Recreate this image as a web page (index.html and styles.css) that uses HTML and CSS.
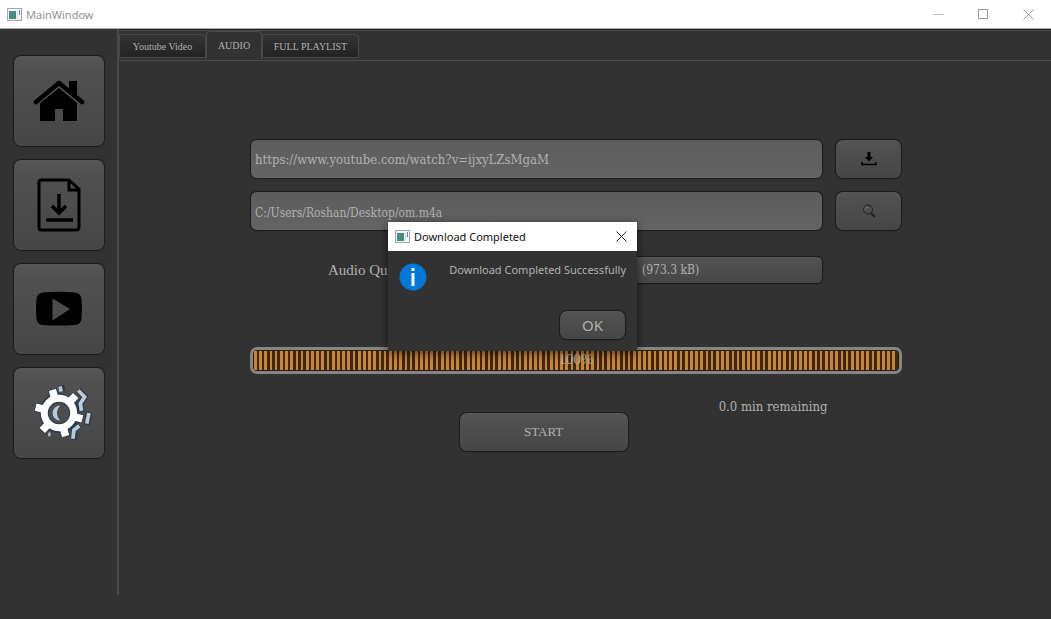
FILE: index.html
```html
<!DOCTYPE html>
<html lang="en">
<head>
<meta charset="utf-8">
<title>MainWindow</title>
<link rel="stylesheet" href="styles.css">
</head>
<body>
<svg class="defs" aria-hidden="true">
  <linearGradient id="tile" x1="0" y1="0" x2="1" y2="1"><stop offset="0" stop-color="#4d86a8"/><stop offset="1" stop-color="#3f8f62"/></linearGradient>
  <symbol id="app" viewBox="0 0 15 13">
    <rect x=".5" y=".5" width="14" height="12" fill="#f4f6f8" stroke="#a3a8ac"/>
    <rect x="2" y="3" width="7" height="8" fill="url(#tile)"/>
    <rect x="10" y="3" width="1" height="8" fill="#d5dadd"/>
    <rect x="12" y="2" width="1" height="5" fill="#5f88a8"/>
  </symbol>
</svg>
<div class="window">
  <header class="titlebar">
    <svg class="app-icon"><use href="#app"/></svg>
    <h1 class="title">MainWindow</h1>
    <div class="controls">
      <button class="control" aria-label="Minimize"><svg width="11" height="11"><path d="M0 5.5h11" stroke="#c0c0c0"/></svg></button>
      <button class="control" aria-label="Maximize"><svg width="11" height="11"><rect x=".5" y=".5" width="9" height="9" fill="none" stroke="#999"/></svg></button>
      <button class="control" aria-label="Close"><svg width="11" height="11"><path d="M.5.5l10 10M10.500.5l-10 10" stroke="#999" fill="none"/></svg></button>
    </div>
  </header>
  <div class="body">
    <nav class="sidebar">
      <button class="btn side-btn" aria-label="Home">
        <svg width="52" height="42" viewBox="0 0 52 42"><path d="M36 1h8v17l-8-7z"/><path d="M3 22L26 3l23 19" fill="none" stroke="#000" stroke-width="4.500" stroke-linecap="round" stroke-linejoin="round"/><path d="M7 23L26 8l18 15v17q0 1-1 1H30V29h-8v12H8q-1 0-1-1z"/><path d="M7 22.500L26 7l19 15.500" fill="none" stroke="#505050"/></svg>
      </button>
      <button class="btn side-btn" aria-label="Downloads">
        <svg width="44" height="54" viewBox="0 0 44 54" fill="none" stroke="#000"><path d="M4 2h28l10 9v38q0 3-3 3H4q-2 0-2-3V4q0-2 2-2z" stroke-width="3" stroke-linejoin="round"/><path d="M32 3v9h9" stroke-width="3"/><path d="M22 16v19M15 28l7 7 7-7M9 42h27" stroke-width="3.500"/></svg>
      </button>
      <button class="btn side-btn" aria-label="Video">
        <svg width="48" height="36" viewBox="0 0 48 36"><path fill-rule="evenodd" d="M8 1.500Q24 0 40 1.500q6 .5 6.500 7 1 9 0 19-.5 6-6.500 6.500-16 1-32 0-6-.5-6.500-6.500-1-10 0-19Q2 2 8 1.500zM17.500 7.500v22L35 18z"/></svg>
      </button>
      <button class="btn side-btn" aria-label="Settings">
        <svg class="gear" width="62" height="56" viewBox="-4 0 58 52">
          <g fill="none" stroke="#2d3b49" stroke-width="6"><path d="M43 5l6 6-4 6 1 8M53 25l-2 12M44 37l-5 5v9M27 0l1 6"/></g>
          <g fill="none" stroke="#b9cad9" stroke-width="3.500"><path d="M43 5l6 6-4 6 1 7M53 26l-2 10M44 38l-5 4-1 8M26 1l1 5M15 46h2"/></g>
          <g transform="rotate(14 25 26)" stroke="#2d3b49" stroke-width="9"><path d="M2 26h46M13.500 6.080l23 39.840M36.500 6.080l-23 39.840"/></g>
          <circle cx="25" cy="26" r="13.500" fill="none" stroke="#2d3b49" stroke-width="10"/>
          <g transform="rotate(14 25 26)" stroke="#fff" stroke-width="7"><path d="M2.500 26h45M13.750 6.500l22.500 39M36.250 6.500l-22.500 39"/></g>
          <circle cx="25" cy="26" r="13" fill="none" stroke="#fff" stroke-width="8"/>
          <circle cx="25" cy="26" r="10" fill="#4b4e51" stroke="#2d3b49"/>
          <path d="M26 19a7 7 0 0 0 0 14q-6-7 0-14z" fill="#b9cad9"/>
        </svg>
      </button>
    </nav>
    <div class="divider"></div>
    <main class="main">
      <div class="tabs" role="tablist">
        <button class="tab tab-video" role="tab">Youtube Video</button>
        <button class="tab tab-active" role="tab" aria-selected="true">AUDIO</button>
        <button class="tab tab-playlist" role="tab">FULL PLAYLIST</button>
      </div>
      <section class="pane">
        <div class="row">
          <input class="field" aria-label="Video URL" value="https://www.youtube.com/watch?v=ijxyLZsMgaM">
          <button class="btn tool" aria-label="Get video"><svg width="16" height="14" viewBox="0 0 16 14"><path d="M6.500 0h3v5H12L8 9.500 4 5h2.500z"/><path d="M1 10v2.500h14V10" fill="none" stroke="#000" stroke-width="1.500"/></svg></button>
        </div>
        <div class="row">
          <input class="field field-path" aria-label="Save location" value="C:/Users/Roshan/Desktop/om.m4a">
          <button class="btn tool" aria-label="Browse"><svg width="14" height="14" viewBox="0 0 14 14" fill="none" stroke="#202020"><circle cx="6" cy="5.500" r="4.500"/><path d="M3.500 5.500q0-2.500 2.500-2.500" stroke="#777"/><path d="M9 9l4 4" stroke-width="2"/></svg></button>
        </div>
        <div class="row quality">
          <label class="quality-label" for="quality">Audio Quality</label>
          <select class="btn combo" id="quality"><option>(973.3 kB)</option></select>
        </div>
        <div class="progress" role="progressbar" aria-label="Download" aria-valuenow="100"><div class="chunks" style="width:100%">100%</div></div>
        <div class="footer">
          <button class="btn start">START</button>
          <span class="remaining">0.0 min remaining</span>
        </div>
      </section>
    </main>
  </div>
  <div class="dialog" role="dialog" aria-labelledby="dialog-title">
    <header class="dialog-bar">
      <svg class="app-icon"><use href="#app"/></svg>
      <h2 class="dialog-title" id="dialog-title">Download Completed</h2>
      <button class="dialog-close" aria-label="Close dialog"><svg width="11" height="11"><path d="M.5.5l10 10M10.500.5l-10 10" stroke="#222" fill="none"/></svg></button>
    </header>
    <div class="dialog-body">
      <svg class="info" width="28" height="28" viewBox="0 0 28 28"><circle cx="14" cy="14" r="13.500" fill="#0078d7"/><path d="M12.500 5h3v3h-3zM12.500 10h3v13h-3z" fill="#fff"/></svg>
      <p class="message">Download Completed Successfully</p>
      <button class="btn ok">OK</button>
    </div>
  </div>
</div>
</body>
</html>
```
FILE: styles.css
```css
* { box-sizing: border-box; }
body { margin: 0; background: #323232; color: #b1b1b1; font-family: "Noto Sans", sans-serif; font-size: 11px; }
button, input, select { font: inherit; color: inherit; margin: 0; }
svg { display: block; }
h1, h2, p { margin: 0; font-size: 11px; font-weight: 400; }
.defs { position: absolute; width: 0; height: 0; }
.window { min-height: 100vh; display: flex; flex-direction: column; position: relative; }

.titlebar { height: 29px; display: flex; align-items: center; gap: 4px; padding-left: 7px; background: #fff; border-bottom: 1px solid #a8ada8; }
.app-icon { width: 15px; height: 13px; }
.title { color: #929292; }
.controls { display: flex; margin-left: auto; }
.control { width: 45px; height: 28px; padding: 0; display: grid; place-items: center; border: 0; background: none; }

.body { flex: 1; display: flex; padding-bottom: 24px; }
.btn { padding: 0; border: 1px solid #1c1c1c; border-radius: 8px; background: linear-gradient(#565656, #505050 20%, #464646); box-shadow: 0 0 1px #1c1c1c; }
.sidebar { display: flex; flex-direction: column; gap: 12px; padding: 26px 12px 0 13px; }
.side-btn { width: 92px; height: 92px; display: grid; place-items: center; }
.gear { overflow: visible; }
.divider { width: 2px; background: #484848; }

.main { flex: 1; display: flex; flex-direction: column; border-top: 1px solid #202020; }
.tabs { display: flex; align-items: flex-end; height: 31px; border-top: 1px solid #484848; border-bottom: 1px solid #4a4a4a; font-family: "Liberation Serif", serif; }
.tab { height: 24px; margin-bottom: 2px; padding: 0; border: 1px solid #484848; background: linear-gradient(#343434, #222); font-size: 10px; border-radius: 0 4px 0 0; }
.tab-video { width: 87px; }
.tab-playlist { width: 97px; }
.tab-active { width: 56px; height: 28px; margin-bottom: 1px; border-bottom: 0; background: #323232; border-radius: 4px 4px 0 0; }

.pane { display: flex; flex-direction: column; padding: 78px 149px 0 131px; font-family: "DejaVu Serif Condensed", "Liberation Serif", serif; }
.row { display: flex; gap: 12px; margin-bottom: 12px; }
.field { flex: 1; min-width: 0; height: 40px; padding: 0 4px; border: 1px solid #1c1c1c; border-radius: 7px; background: linear-gradient(#5d5d5d, #646464); box-shadow: 0 0 1px #1c1c1c; font-size: 13px; }
.field-path { padding-top: 3px; font-size: 12px; }
.tool { width: 67px; height: 40px; display: grid; place-items: center; }
.quality { margin: 13px 79px 0 78px; align-items: center; }
.quality-label { width: 90px; font-family: "Liberation Serif", serif; font-size: 15px; }
.combo { appearance: none; flex: 1; height: 28px; padding-left: 211px; border-radius: 6px; font-size: 12px; }
.progress { margin-top: 63px; height: 27px; padding: 1px; border: 3px solid #858585; border-radius: 7px; background: #2a2015; }
.chunks { height: 19px; line-height: 16px; text-align: center; font-family: "Liberation Serif", serif; font-size: 15px; background: repeating-linear-gradient(90deg, #cb8430 0 0.42%, #3c2810 0.42% 0.806%); }
.footer { display: flex; align-items: flex-start; padding: 24px 0 0 32%; }
.start { width: 170px; height: 40px; margin-top: 14px; font-family: "Liberation Serif", serif; font-size: 13px; }
.remaining { margin-left: 90px; font-size: 13px; line-height: 18px; }

.dialog { position: absolute; left: 388px; top: 222px; width: 249px; background: #323232; box-shadow: 0 2px 9px rgba(0, 0, 0, 0.6); }
.dialog-bar { height: 29px; display: flex; align-items: center; gap: 4px; padding: 0 10px 0 7px; background: #fff; color: #111; }
.dialog-close { margin-left: auto; padding: 0; border: 0; background: none; }
.dialog-body { display: grid; grid-template-columns: 28px 1fr; justify-items: end; padding: 10px 11px 11px; }
.info { margin-top: 2px; }
.message { line-height: 18px; white-space: nowrap; }
.ok { grid-column: 2; width: 67px; height: 30px; margin-top: 19px; font-size: 15px; line-height: 24px; }
```
